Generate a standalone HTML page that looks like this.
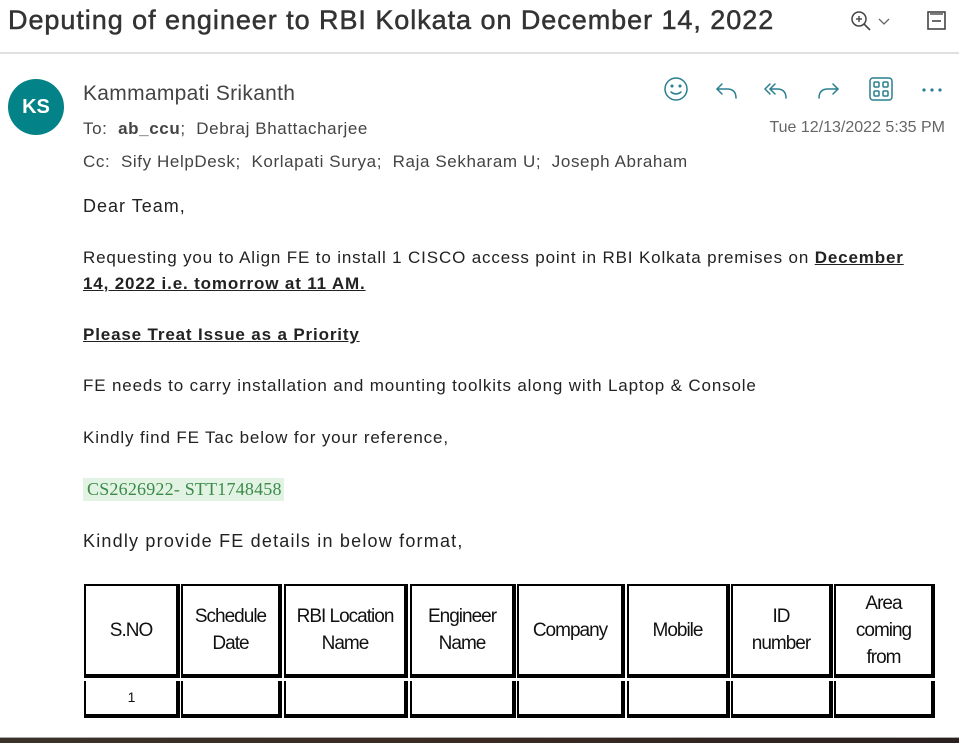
<!DOCTYPE html>
<html><head><meta charset="utf-8">
<style>
html,body{margin:0;padding:0;background:#fff;width:959px;height:755px;overflow:hidden;position:relative;font-family:"Liberation Sans",Arial,sans-serif}
.a{position:absolute;white-space:nowrap}
.hd{color:#444}
.b{color:#222;font-size:17px;letter-spacing:0.85px}
.cell{position:absolute;border:2px solid #000;border-right-width:4px;border-bottom-width:4px;box-sizing:border-box;display:flex;align-items:center;justify-content:center;text-align:center;font-size:19px;line-height:27px;color:#111;letter-spacing:-1px;font-family:"Liberation Sans",sans-serif}
svg{position:absolute}
</style></head><body>
<div class="a" style="left:8px;top:5px;font-size:27px;color:#333;letter-spacing:0.95px;-webkit-text-stroke:0.5px #333">Deputing of engineer to RBI Kolkata on December 14, 2022</div>
<svg style="left:848px;top:8px" width="52" height="28" viewBox="0 0 52 28"><circle cx="11" cy="11" r="7" fill="none" stroke="#444" stroke-width="1.5"/><line x1="16" y1="16" x2="22" y2="22" stroke="#444" stroke-width="1.6"/><line x1="8" y1="11" x2="14" y2="11" stroke="#444" stroke-width="1.4"/><line x1="11" y1="8" x2="11" y2="14" stroke="#444" stroke-width="1.4"/><path d="M31 11l5 5 5-5" fill="none" stroke="#666" stroke-width="1.3"/></svg>
<svg style="left:926px;top:9px" width="22" height="24" viewBox="0 0 22 24"><rect x="2" y="3" width="17" height="17" fill="none" stroke="#444" stroke-width="1.6"/><line x1="4" y1="5" x2="17" y2="5" stroke="#444" stroke-width="1.4"/><line x1="6" y1="12" x2="15" y2="12" stroke="#444" stroke-width="1.6"/></svg>
<div class="a" style="left:0;top:52px;width:959px;height:2px;background:#e0e0e0"></div>
<div class="a" style="left:8px;top:79px;width:56px;height:56px;border-radius:50%;background:#038387;color:#fff;font-weight:bold;font-size:20px;line-height:56px;text-align:center">KS</div>
<div class="a hd" style="left:83px;top:82px;font-size:21px;letter-spacing:0.3px;color:#444">Kammampati Srikanth</div>
<div class="a hd" style="left:83px;top:119px;font-size:17px;letter-spacing:0.6px">To:&nbsp; <b>ab_ccu</b>;&nbsp; Debraj Bhattacharjee</div>
<div class="a hd" style="left:83px;top:152px;font-size:17px;letter-spacing:0.6px">Cc:&nbsp; Sify HelpDesk;&nbsp; Korlapati Surya;&nbsp; Raja Sekharam U;&nbsp; Joseph Abraham</div>
<div class="a" style="right:14px;top:119px;font-size:16px;color:#666">Tue 12/13/2022 5:35 PM</div>
<svg style="left:660px;top:75px" width="290" height="28" viewBox="0 0 290 28">
<g fill="none" stroke="#2a7f8f" stroke-width="1.5" stroke-linecap="round" stroke-linejoin="round">
<circle cx="16" cy="14" r="11"/><circle cx="12" cy="11" r=".8" fill="#2a7f8f"/><circle cx="20" cy="11" r=".8" fill="#2a7f8f"/><path d="M11 17q5 4 10 0"/>
<path d="M62 9l-5 5 5 5"/><path d="M57 14h10q9 0 9 9"/>
<path d="M110 9l-5 5 5 5"/><path d="M115 9l-5 5 5 5"/><path d="M110 14h7q9 0 9 9"/>
<path d="M173 9l5 5-5 5"/><path d="M178 14h-10q-9 0-9 9"/>
<rect x="210" y="3" width="22" height="22" rx="3"/><rect x="214" y="7" width="5" height="5" rx="1"/><rect x="223" y="7" width="5" height="5" rx="1"/><rect x="214" y="16" width="5" height="5" rx="1"/><rect x="223" y="16" width="5" height="5" rx="1"/>
</g>
<g fill="#2a7f8f"><circle cx="264" cy="15" r="1.6"/><circle cx="272" cy="15" r="1.6"/><circle cx="280" cy="15" r="1.6"/></g>
</svg>
<div class="a b" style="left:83px;top:196px;font-size:18px;letter-spacing:1px">Dear Team,</div>
<div class="a b" style="left:83px;top:248px">Requesting you to Align FE to install 1 CISCO access point in RBI Kolkata premises on <b><u>December</u></b></div>
<div class="a b" style="left:83px;top:274px"><b><u>14, 2022 i.e. tomorrow at 11 AM.</u></b></div>
<div class="a b" style="left:83px;top:325px"><b><u>Please Treat Issue as a Priority</u></b></div>
<div class="a b" style="left:83px;top:376px">FE needs to carry installation and mounting toolkits along with Laptop &amp; Console</div>
<div class="a b" style="left:83px;top:428px">Kindly find FE Tac below for your reference,</div>
<div class="a" style="left:83px;top:478px;background:#e3f3e3;color:#3a8a4a;font-family:'Liberation Serif',serif;font-size:18px;letter-spacing:0.2px;padding:1px 2px 1px 4px">CS2626922- STT1748458</div>
<div class="a b" style="left:83px;top:531px;font-size:18px;letter-spacing:1.2px">Kindly provide FE details in below format,</div>

<div class="cell" style="left:84px;top:584px;width:96px;height:94px">S.NO</div>
<div class="cell" style="left:181px;top:584px;width:101px;height:94px">Schedule<br>Date</div>
<div class="cell" style="left:284px;top:584px;width:124px;height:94px">RBI Location<br>Name</div>
<div class="cell" style="left:410px;top:584px;width:106px;height:94px">Engineer<br>Name</div>
<div class="cell" style="left:517px;top:584px;width:108px;height:94px">Company</div>
<div class="cell" style="left:627px;top:584px;width:103px;height:94px">Mobile</div>
<div class="cell" style="left:731px;top:584px;width:102px;height:94px">ID<br>number</div>
<div class="cell" style="left:834px;top:584px;width:101px;height:94px">Area<br>coming<br>from</div>

<div class="cell" style="left:84px;top:681px;width:96px;height:37px;border-top:none;font-size:14px">1</div>
<div class="cell" style="left:181px;top:681px;width:101px;height:37px;border-top:none"></div>
<div class="cell" style="left:284px;top:681px;width:124px;height:37px;border-top:none"></div>
<div class="cell" style="left:410px;top:681px;width:106px;height:37px;border-top:none"></div>
<div class="cell" style="left:517px;top:681px;width:108px;height:37px;border-top:none"></div>
<div class="cell" style="left:627px;top:681px;width:103px;height:37px;border-top:none"></div>
<div class="cell" style="left:731px;top:681px;width:102px;height:37px;border-top:none"></div>
<div class="cell" style="left:834px;top:681px;width:101px;height:37px;border-top:none"></div>

<div class="a" style="left:0;top:737px;width:959px;height:1px;background:#aaa"></div>
<div class="a" style="left:0;top:738px;width:959px;height:5px;background:linear-gradient(90deg,#3a3228,#3a2a22 50%,#2a2020)"></div>
</body></html>
